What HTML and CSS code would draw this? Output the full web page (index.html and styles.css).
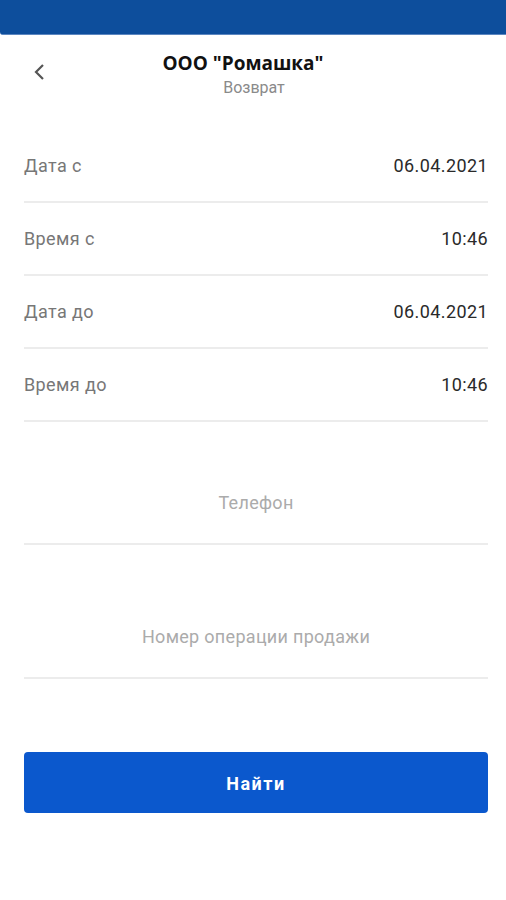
FILE: index.html
```html
<!DOCTYPE html>
<html lang="ru">

<head>
    <meta charset="UTF-8">
    <meta name="viewport" content="width=device-width, initial-scale=1.0">
    <title>Возврат</title>
    <link rel="stylesheet" href="styles.css">
</head>

<body>
    <div class="topbar"></div>

    <div class="head">
        <button class="back" aria-label="Назад">
            <svg width="12" height="18" viewBox="0 0 12 18">
                <path d="M10 2 L3 9 L10 16" fill="none" stroke="#555" stroke-width="2.2" />
            </svg>
        </button>
        <div class="title">
            <h1>ООО "Ромашка"</h1>
            <p>Возврат</p>
        </div>
    </div>

    <div class="form">
        <div class="row">
            <span class="label">Дата с</span>
            <span class="value">06.04.2021</span>
        </div>
        <div class="row">
            <span class="label">Время с</span>
            <span class="value">10:46</span>
        </div>
        <div class="row">
            <span class="label">Дата до</span>
            <span class="value">06.04.2021</span>
        </div>
        <div class="row">
            <span class="label">Время до</span>
            <span class="value">10:46</span>
        </div>

        <div class="field phone">
            <input type="text" placeholder="Телефон" />
        </div>
        <div class="field sale">
            <input type="text" placeholder="Номер операции продажи" />
        </div>

        <button class="find">Найти</button>
    </div>
</body>

</html>
```

FILE: styles.css
```css
body {
    margin: 0;
    font-family: Roboto, "Noto Sans", sans-serif;
    background: #fff;
    color: #222;
    width: 506px;
}

.topbar {
    height: 34px;
    background: #0d4e9c;
    border-bottom: 1px solid #5b86c0;
    border-bottom-left-radius: 3px;
}

.head {
    display: flex;
    align-items: flex-start;
    height: 93px;
}

.back {
    border: none;
    background: none;
    padding: 0;
    margin: 28px 0 0 33px;
    width: 12px;
    height: 18px;
    cursor: pointer;
}

.title {
    flex: 1;
    text-align: center;
    margin-right: 45px;
    padding-top: 15px;
}

.title h1 {
    margin: 0;
    font-family: "Open Sans", "Noto Sans", sans-serif;
    font-size: 19px;
    font-weight: 700;
    line-height: 27px;
    color: #111;
    padding-right: 20px;
}

.title p {
    margin: 1px 0 0;
    font-size: 16px;
    line-height: 19px;
    color: #8a8a8a;
    padding-left: 2px;
}

.form {
    padding: 2px 18px 0 24px;
}

.row {
    display: flex;
    justify-content: space-between;
    align-items: center;
    height: 71px;
    border-bottom: 2px solid #ececec;
    font-size: 18px;
    letter-spacing: 0.4px;
}

.label {
    color: #777;
}

.value {
    color: #2a2a2a;
}

.field {
    height: 82px;
    display: flex;
    border-bottom: 2px solid #ececec;
}

.phone {
    margin-top: 39px;
}

.sale {
    margin-top: 50px;
}

.field input {
    flex: 1;
    border: none;
    outline: none;
    background: none;
    text-align: center;
    font-family: Roboto, sans-serif;
    font-size: 18px;
    letter-spacing: 0.3px;
    color: #222;
}

.field input::placeholder {
    color: #ababab;
}

.find {
    display: block;
    width: 100%;
    height: 61px;
    margin-top: 73px;
    padding-top: 3px;
    border: none;
    border-radius: 4px;
    background: #0b58cd;
    color: #fff;
    font-family: Roboto, sans-serif;
    font-size: 18px;
    font-weight: 700;
    letter-spacing: 1.5px;
    cursor: pointer;
}
```
